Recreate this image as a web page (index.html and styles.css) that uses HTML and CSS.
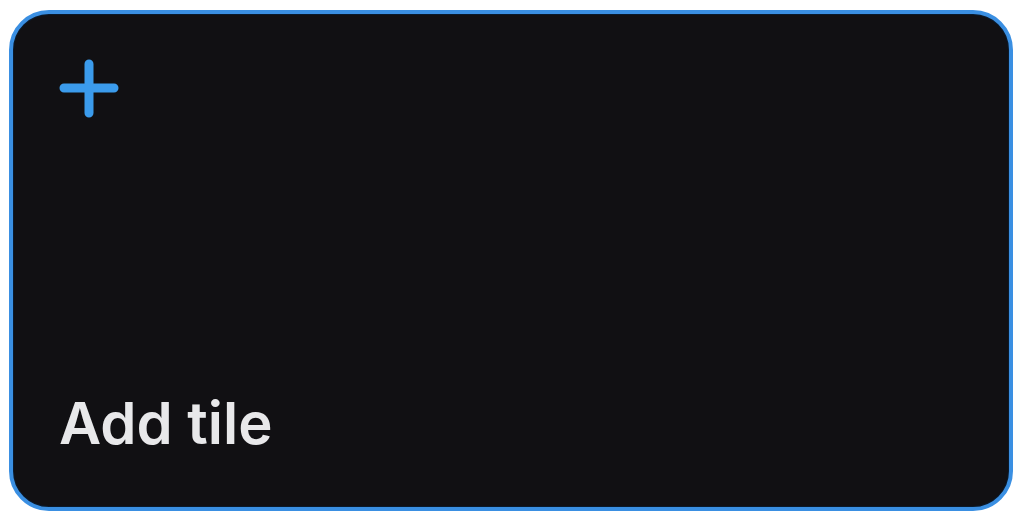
FILE: index.html
```html
<!DOCTYPE html>
<html>
<head>
<meta charset="utf-8">
<link rel="stylesheet" href="styles.css">
</head>
<body>
<div class="tile">
  <svg class="plus" width="60" height="60" viewBox="0 0 60 60">
    <path d="M30 6 V55 M5 30 H55" stroke="#3b9bec" stroke-width="9" stroke-linecap="round" fill="none"/>
  </svg>
  <div class="label">Add tile</div>
</div>
</body>
</html>
```
FILE: styles.css
```css
html, body {
  margin: 0;
  padding: 0;
  background: #ffffff;
}
body {
  padding: 10px 0 0 9px;
}
.tile {
  box-sizing: border-box;
  width: 1004px;
  height: 501px;
  background: #111013;
  border: 4px solid #3a8fe2;
  border-radius: 40px;
  box-shadow: inset 0 0 0 1px #0a1a2c;
  padding: 44px 0 55px 46px;
  display: flex;
  flex-direction: column;
  justify-content: space-between;
}
.plus {
  display: block;
}
.label {
  font-family: Inter, "Noto Sans", sans-serif;
  font-weight: 600;
  font-size: 58px;
  line-height: 1;
  color: #e8e8ea;
}
```
